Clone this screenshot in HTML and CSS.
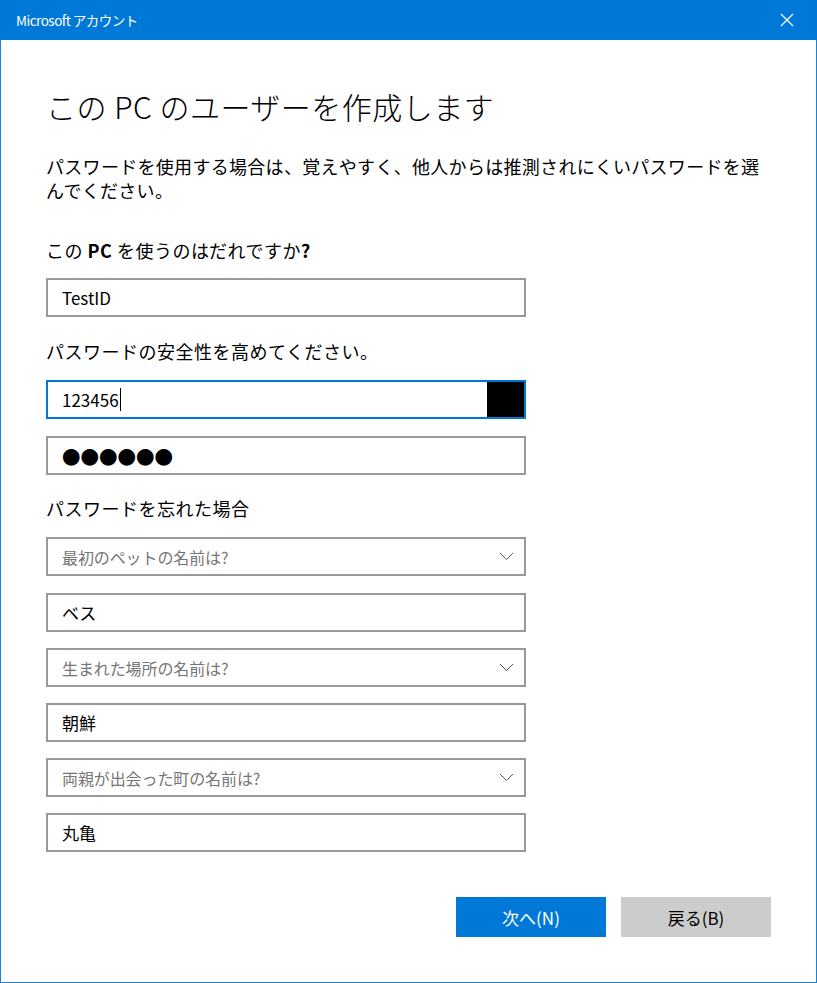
FILE: index.html
```html
<!DOCTYPE html>
<html lang="ja">
<head>
<meta charset="utf-8">
<title>Microsoft アカウント</title>
<link rel="stylesheet" href="styles.css">
</head>
<body>
<div class="window">
  <div class="titlebar">
    <span class="title">Microsoft アカウント</span>
    <svg class="close" width="14" height="14" viewBox="0 0 14 14"><path d="M1 1 L13 13 M13 1 L1 13" stroke="#fff" stroke-width="1.2" fill="none"/></svg>
  </div>
  <div class="content">
    <h1 class="heading">この PC のユーザーを作成します</h1>
    <p class="intro">パスワードを使用する場合は、覚えやすく、他人からは推測されにくいパスワードを選んでください。</p>
    <div class="label label-first">この <b>PC</b> を使うのはだれですか<b>?</b></div>
    <div class="field f-after-label"><span class="value">TestID</span></div>
    <div class="label label-next">パスワードの安全性を高めてください。</div>
    <div class="field field-focus f-after-label2"><span class="value">123456</span><span class="caret"></span><span class="reveal"></span></div>
    <div class="field f-gap17"><span class="value dots">●●●●●●</span></div>
    <div class="label label-third">パスワードを忘れた場合</div>
    <div class="field select f-after-label2"><span class="placeholder">最初のペットの名前は?</span><svg class="chev" width="15" height="9" viewBox="0 0 15 9"><polyline points="1,1 7.5,7.5 14,1" fill="none" stroke="#555" stroke-width="1"/></svg></div>
    <div class="field f-gap17"><span class="value">ベス</span></div>
    <div class="field select f-gap16"><span class="placeholder">生まれた場所の名前は?</span><svg class="chev" width="15" height="9" viewBox="0 0 15 9"><polyline points="1,1 7.5,7.5 14,1" fill="none" stroke="#555" stroke-width="1"/></svg></div>
    <div class="field f-gap16"><span class="value">朝鮮</span></div>
    <div class="field select f-gap16"><span class="placeholder">両親が出会った町の名前は?</span><svg class="chev" width="15" height="9" viewBox="0 0 15 9"><polyline points="1,1 7.5,7.5 14,1" fill="none" stroke="#555" stroke-width="1"/></svg></div>
    <div class="field f-gap16"><span class="value">丸亀</span></div>
    <div class="buttons">
      <div class="btn btn-primary">次へ(N)</div>
      <div class="btn btn-secondary">戻る(B)</div>
    </div>
  </div>
</div>
</body>
</html>
```

FILE: styles.css
```css
* { box-sizing: border-box; }
html, body { margin: 0; padding: 0; background: #fff; }
body {
  font-family: "Noto Sans CJK JP", "Noto Sans", sans-serif;
  color: #000;
}
.window {
  width: 817px;
  height: 983px;
  display: flex;
  flex-direction: column;
}
.titlebar {
  height: 40px;
  background: #0078d7;
  display: flex;
  align-items: center;
  justify-content: space-between;
  padding: 0 23px 0 16px;
  color: #fff;
}
.title {
  font-size: 13.5px;
  line-height: 20px;
  letter-spacing: -0.5px;
}
.close { display: block; }
.content {
  flex: 1;
  border: 1px solid #1883d7;
  border-top: none;
  padding: 0 0 0 45px;
}
.heading {
  margin: 46px 0 0 0;
  font-size: 30px;
  line-height: 40px;
  font-weight: 300;
  letter-spacing: 0.5px;
}
.intro {
  margin: 28px 0 0 0;
  font-size: 18px;
  line-height: 24px;
  width: 725px;
  letter-spacing: 0.3px;
}
.label {
  font-size: 18px;
  line-height: 25px;
  letter-spacing: 0.5px;
}
.label b { font-weight: 700; }
.label-first { margin-top: 36px; }
.label-next { margin-top: 22px; }
.label-third { margin-top: 21px; }
.field {
  width: 480px;
  height: 39px;
  border: 2px solid #999;
  display: flex;
  align-items: center;
  padding-left: 14px;
  font-size: 17px;
  position: relative;
}
.f-after-label { margin-top: 15px; }
.f-after-label2 { margin-top: 16px; }
.f-gap16 { margin-top: 16px; }
.f-gap17 { margin-top: 17px; }
.field-focus { border-color: #0078d7; }
.value { line-height: 24px; }
.dots { font-size: 18.5px; letter-spacing: 0; }
.caret {
  width: 1px;
  height: 23px;
  background: #000;
  margin-left: 1px;
}
.reveal {
  position: absolute;
  right: 0;
  top: 0;
  width: 37px;
  height: 35px;
  background: #000;
}
.placeholder { color: #767676; font-size: 16px; letter-spacing: -0.1px; }
.select { justify-content: space-between; padding-right: 10px; }
.chev { display: block; }
.buttons {
  margin-top: 45px;
  display: flex;
  gap: 15px;
  padding-left: 410px;
}
.btn {
  width: 150px;
  height: 40px;
  display: flex;
  align-items: center;
  justify-content: center;
  font-size: 17px;
}
.btn-primary { background: #0078d7; color: #fff; }
.btn-secondary { background: #cccccc; color: #000; }
```
